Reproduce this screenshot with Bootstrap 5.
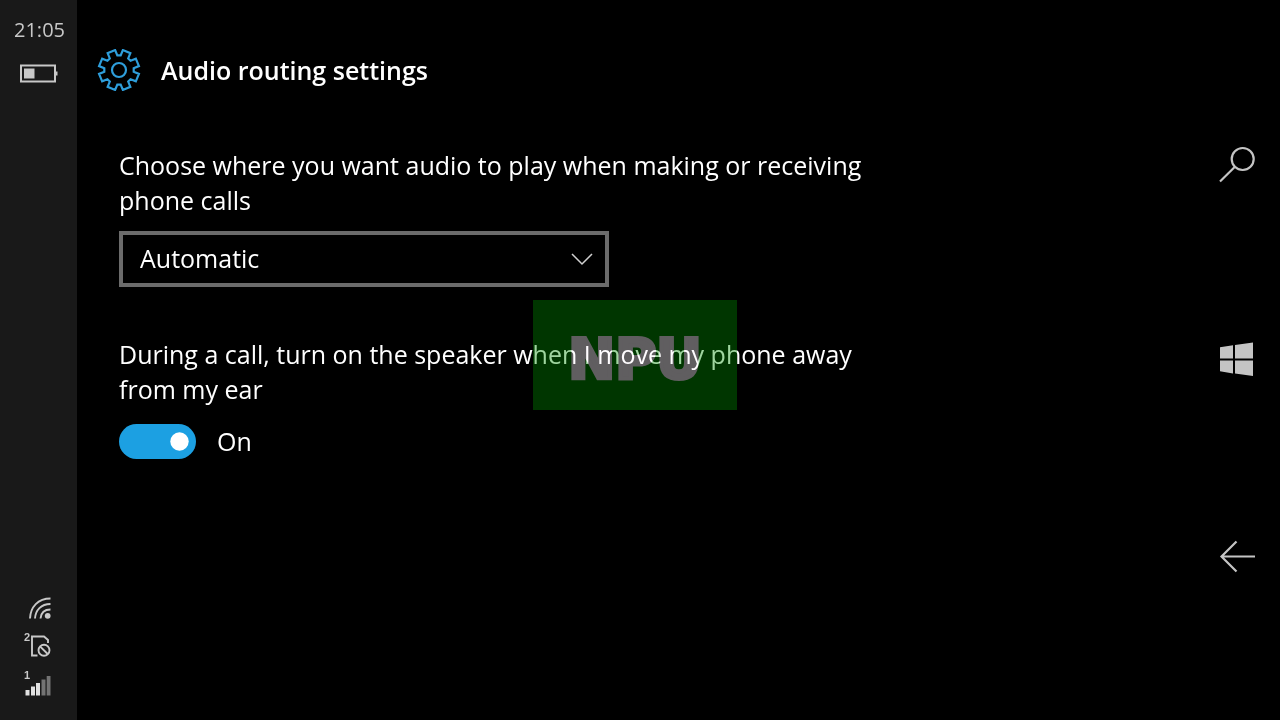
<!DOCTYPE html>
<html lang="en">
<head>
<meta charset="utf-8">
<meta name="viewport" content="width=device-width, initial-scale=1">
<title>Audio routing settings</title>
<link href="https://cdn.jsdelivr.net/npm/bootstrap@5.3.0/dist/css/bootstrap.min.css" rel="stylesheet">
<style>
  body { background: #000; color: #fff; font-family: "Open Sans", "Noto Sans", sans-serif; font-size: 25px; line-height: 35px; }
  svg { display: block; }
  .status-bar { width: 77px; background: #191919; color: #c8c8c8; padding: 12px 0 24px; }
  .clock { font-size: 20px; margin-left: 2px; }
  .battery { margin-top: 17px; }
  .status-icons { gap: 11px; margin-right: 2px; }
  .page-title { font-size: 25px; line-height: 35px; font-weight: 600; }
  .settings { padding: 49px 20px 20px; }
  .settings-body { max-width: 772px; padding: 57px 0 0 22px; }
  .route-select { width: 490px; max-width: 100%; height: 56px; padding: 0 60px 2px 17px; border: 4px solid #6b6b6b; border-radius: 0; font-size: 25px; line-height: 35px; color: #fff; background-color: #000;
    background-image: url("data:image/svg+xml,%3Csvg xmlns='http://www.w3.org/2000/svg' viewBox='0 0 22 22'%3E%3Cpath d='M1 6l10 10L21 6' fill='none' stroke='%23d0d0d0' stroke-width='1.5'/%3E%3C/svg%3E"); background-size: 22px 22px; background-position: right 12px center; margin-top: 13px; }
  .second-group { margin-top: 50px; }
  .toggle-row { margin-top: 17px; gap: 21px; }
  .toggle-row .form-check-input, .toggle-row .form-check-input:checked { width: 77px; height: 35px; margin: 0; border: 0; background-color: #1ca0e2; background-size: 25px 25px; background-position: right 4px center;
    background-image: url("data:image/svg+xml,%3Csvg xmlns='http://www.w3.org/2000/svg' viewBox='0 0 25 25'%3E%3Ccircle cx='12.5' cy='12.5' r='9.2' fill='%23fff'/%3E%3C/svg%3E"); }
  .nav-keys { width: 86px; padding: 144px 0; }
  .nav-keys .btn { border: 0; border-radius: 0; color: #c4c4c4; }
  .stamp { top: 300px; left: 533px; width: 204px; height: 110px; padding-top: 8px; background: rgba(0, 144, 0, .375); pointer-events: none; }
  .stamp-text { font: bold 56px/60px "DejaVu Sans", sans-serif; color: rgb(96, 40, 96); -webkit-text-stroke: 4px rgb(96, 40, 96); mix-blend-mode: plus-lighter; }
</style>
</head>
<body>
<div class="d-flex min-vh-100">
  <aside class="status-bar d-flex flex-column align-items-center flex-shrink-0">
    <time class="clock">21:05</time>
    <svg class="battery" width="38" height="20" viewBox="0 0 38 20" role="img" aria-label="Battery"><path d="M1 1.500h34v16H1z" fill="none" stroke="currentColor" stroke-width="2"/><path d="M4 4.500h10.500v10H4zM35 7.500h2.500v4H35z" fill="currentColor"/></svg>
    <div class="status-icons mt-auto d-flex flex-column align-items-center">
      <svg width="28" height="24" viewBox="0 0 28 24" role="img" aria-label="Wi-Fi"><g fill="none" stroke="currentColor" stroke-width="1.900"><path d="M6 22.500C6.500 11 14 2.500 26.500 2.500M11 22.500C11.500 14 17 8 26.500 8M16.500 22.500C17 17 20 13.500 26.500 13.500"/></g><circle cx="23.700" cy="19.800" r="2.900" fill="currentColor"/></svg>
      <svg width="28" height="28" viewBox="0 0 28 28" role="img" aria-label="SIM 2 unavailable"><text x="0" y="10" font-family="Liberation Sans" font-weight="bold" font-size="11" fill="currentColor">2</text><g fill="none" stroke="currentColor" stroke-width="1.900"><path d="M13.500 24.500H8V5.500h12l4 3.500v3"/><circle cx="20" cy="19.200" r="5.500"/><path d="M16 15.300l7.700 7.700"/></g></svg>
      <svg width="28" height="26" viewBox="0 0 28 26" role="img" aria-label="SIM 1 signal"><text x="0" y="9" font-family="Liberation Sans" font-weight="bold" font-size="11" fill="currentColor">1</text><path d="M1.500 20H5.500v5.500h-4zM7 16.500h4v9H7zM12 13h4v12.500h-4z" fill="#e0e0e0"/><path d="M17.500 9.500h4v16h-4zM22.700 6h3.800v19.500h-3.800z" fill="#737373"/></svg>
    </div>
  </aside>

  <main class="settings flex-grow-1">
    <header class="d-flex align-items-center gap-3">
      <svg width="44" height="42" viewBox="-22 -21 44 42" fill="none" stroke="#2e9edb" stroke-width="2.200" aria-hidden="true"><circle r="7"/><path id="gear" d=""/></svg>
      <h1 class="page-title m-0 ms-1">Audio routing settings</h1>
    </header>
    <div class="settings-body">
      <label class="d-block" for="route">Choose where you want audio to play when making or receiving phone calls</label>
      <select class="form-select route-select" id="route"><option>Automatic</option><option>Speaker</option></select>
      <p class="second-group mb-0" id="speaker-label">During a call, turn on the speaker when I move my phone away from my ear</p>
      <div class="toggle-row form-switch d-flex align-items-center p-0">
        <input class="form-check-input" type="checkbox" role="switch" id="speaker" aria-describedby="speaker-label" checked>
        <label for="speaker">On</label>
      </div>
    </div>
  </main>

  <nav class="nav-keys d-flex flex-column align-items-center justify-content-between flex-shrink-0" aria-label="Phone keys">
    <button class="btn p-0" aria-label="Search"><svg width="40" height="40" viewBox="0 0 40 40" fill="none" stroke="currentColor" stroke-width="2.200"><circle cx="25.700" cy="15" r="11"/><path d="M17.700 23L3 37.500"/></svg></button>
    <button class="btn p-0" aria-label="Start"><svg width="40" height="40" viewBox="0 0 40 40" fill="currentColor"><path d="M3 7.300l13-2V18.500H3zM18 5l18-2.500v16H18zM3 20.500h13v13L3 31.300zM18 20.500h18V36l-18-2.500z"/></svg></button>
    <button class="btn p-0" aria-label="Back"><svg width="40" height="40" viewBox="0 0 40 40" fill="none" stroke="currentColor" stroke-width="2.200"><path d="M38 20.500H4M19.500 5.500l-15 15 15 15"/></svg></button>
  </nav>
</div>

<div class="stamp position-absolute d-flex align-items-center justify-content-center"><span class="stamp-text">NPU</span></div>

<script>
  // Eight-tooth gear outline
  const points = [];
  for (let i = 0; i < 8; i++) {
    const mid = i * 45 + 22.5;
    [[-16, 14.8], [-11.5, 20.3], [11.5, 20.3], [16, 14.8]].forEach(([a, r]) => {
      const t = (mid + a) * Math.PI / 180;
      points.push((r * Math.cos(t)).toFixed(2) + ' ' + (r * Math.sin(t)).toFixed(2));
    });
  }
  document.getElementById('gear').setAttribute('d', 'M' + points.join('L') + 'Z');
</script>
<script src="https://cdn.jsdelivr.net/npm/bootstrap@5.3.0/dist/js/bootstrap.bundle.min.js"></script>
</body>
</html>
